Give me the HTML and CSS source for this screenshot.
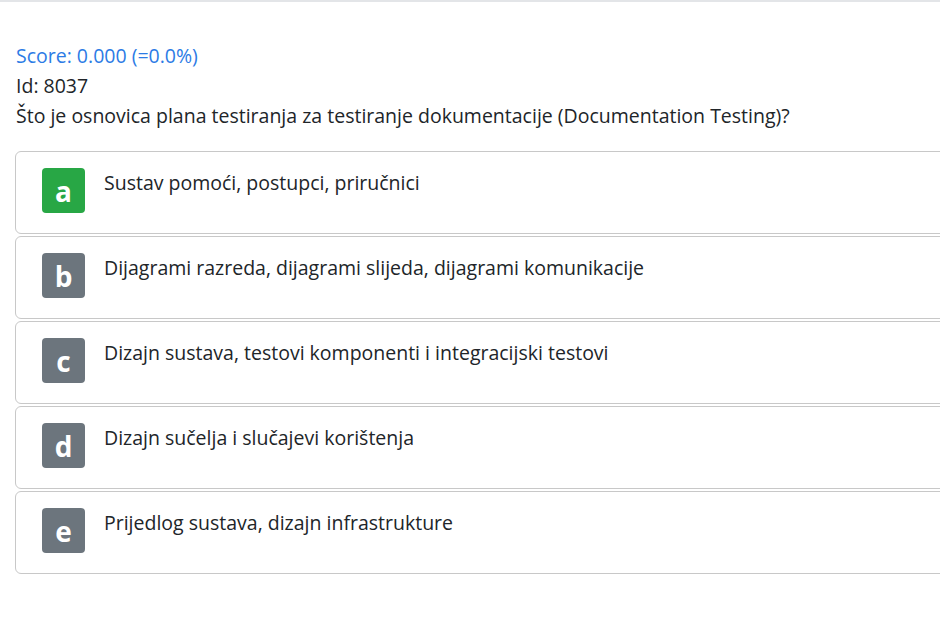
FILE: index.html
```html
<!DOCTYPE html>
<html lang="hr">
<head>
    <meta charset="UTF-8">
    <title>Pitanje 8037</title>
    <link rel="stylesheet" href="styles.css">
</head>
<body>
    <div class="top-bar"></div>

    <div class="question">
        <div class="score">Score: 0.000 (=0.0%)</div>
        <div class="qid">Id: 8037</div>
        <div class="qtext">Što je osnovica plana testiranja za testiranje dokumentacije (Documentation Testing)?</div>
    </div>

    <div class="answers">
        <div class="answer">
            <span class="badge correct">a</span>
            <span class="answer-text">Sustav pomoći, postupci, priručnici</span>
        </div>
        <div class="answer">
            <span class="badge">b</span>
            <span class="answer-text">Dijagrami razreda, dijagrami slijeda, dijagrami komunikacije</span>
        </div>
        <div class="answer">
            <span class="badge">c</span>
            <span class="answer-text">Dizajn sustava, testovi komponenti i integracijski testovi</span>
        </div>
        <div class="answer">
            <span class="badge">d</span>
            <span class="answer-text">Dizajn sučelja i slučajevi korištenja</span>
        </div>
        <div class="answer">
            <span class="badge">e</span>
            <span class="answer-text">Prijedlog sustava, dizajn infrastrukture</span>
        </div>
    </div>
</body>
</html>
```

FILE: styles.css
```css
body {
    font-family: 'Open Sans', 'Noto Sans', sans-serif;
    font-size: 19.5px;
    color: #212529;
    margin: 0;
    padding: 0;
    background: #ffffff;
    overflow: hidden;
}

.top-bar {
    height: 2px;
    background-color: #e3e5e8;
}

.question {
    padding: 39px 16px 0 16px;
    line-height: 30px;
}

.score {
    color: #2c7be5;
}

.answers {
    margin-top: 20px;
    padding-left: 15px;
    width: 960px;
}

.answer {
    display: flex;
    align-items: flex-start;
    box-sizing: border-box;
    height: 83px;
    border: 1px solid #c8c8c8;
    border-radius: 6px;
    padding: 16px 0 0 26px;
    margin-bottom: 2px;
}

.badge {
    width: 43px;
    height: 45px;
    border-radius: 4px;
    background-color: #6c757d;
    color: #ffffff;
    font-weight: bold;
    font-size: 28px;
    display: flex;
    align-items: center;
    justify-content: center;
    flex-shrink: 0;
}

.badge.correct {
    background-color: #28a745;
}

.answer-text {
    margin-left: 19px;
    line-height: 26px;
    padding-top: 2px;
}
```
